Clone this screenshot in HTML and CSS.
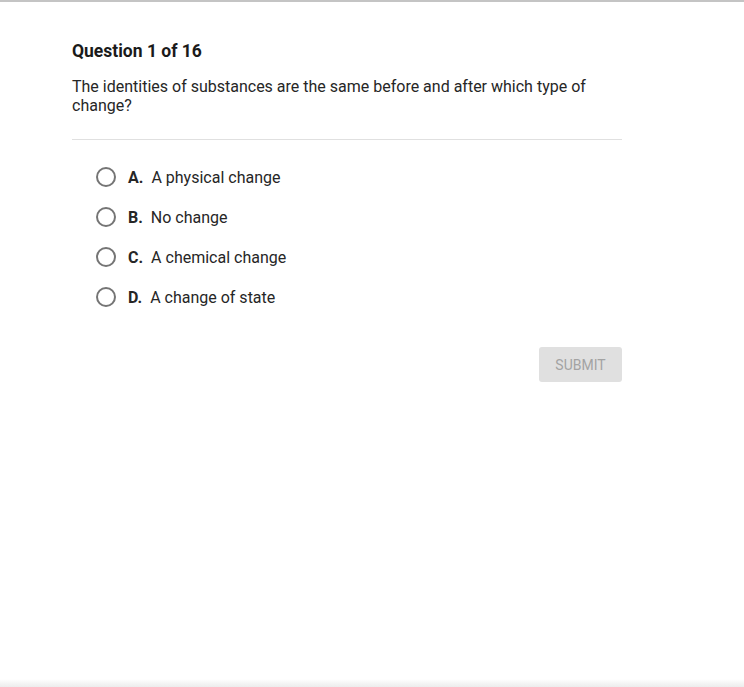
FILE: index.html
```html
<!DOCTYPE html>
<html lang="en">
<head>
    <meta charset="UTF-8">
    <title>Question 1 of 16</title>
    <link rel="stylesheet" href="styles.css">
</head>
<body>
    <div class="page">
        <div class="quiz">
            <h2 class="q-title">Question 1 of 16</h2>
            <p class="q-text">The identities of substances are the same before and after which type of change?</p>

            <div class="answers">
                <label class="answer"><span class="radio"></span><b>A.</b>A physical change</label>
                <label class="answer"><span class="radio"></span><b>B.</b>No change</label>
                <label class="answer"><span class="radio"></span><b>C.</b>A chemical change</label>
                <label class="answer"><span class="radio"></span><b>D.</b>A change of state</label>
            </div>

            <div class="actions">
                <button class="submit" disabled>SUBMIT</button>
            </div>
        </div>
        <div class="bottom-fade"></div>
    </div>
</body>
</html>
```

FILE: styles.css
```css
body {
    margin: 0;
    font-family: Roboto, "Liberation Sans", sans-serif;
    color: #212121;
    background: #fff;
}

.page {
    height: 687px;
    box-sizing: border-box;
    border-top: 2px solid #c4c4c4;
    display: flex;
    flex-direction: column;
}

.quiz {
    width: 550px;
    margin-left: 72px;
    padding-top: 39px;
    flex: 1;
}

.q-title {
    font-size: 17.5px;
    font-weight: 700;
    margin: 0;
    line-height: 20px;
    color: #1a1a1a;
}

.q-text {
    font-size: 16px;
    line-height: 19px;
    margin: 16px 0 0;
    padding-bottom: 24px;
    border-bottom: 1px solid #e0e0e0;
    color: #262626;
}

.answers {
    padding: 17px 0 0 24px;
}

.answer {
    display: flex;
    align-items: center;
    height: 40px;
    font-size: 16px;
    color: #262626;
}

.answer b {
    font-weight: 700;
    margin-right: 8px;
    margin-left: 12px;
}

.radio {
    width: 16px;
    height: 16px;
    border: 2px solid #757575;
    border-radius: 50%;
}

.actions {
    display: flex;
    justify-content: flex-end;
    margin-top: 30px;
}

.submit {
    width: 83px;
    height: 35px;
    border: none;
    border-radius: 3px;
    background: #e0e0e0;
    color: #a3a3a3;
    font-family: Roboto, "Liberation Sans", sans-serif;
    font-size: 14px;
}

.bottom-fade {
    height: 8px;
    background: linear-gradient(#fff, #ececec);
}
```
